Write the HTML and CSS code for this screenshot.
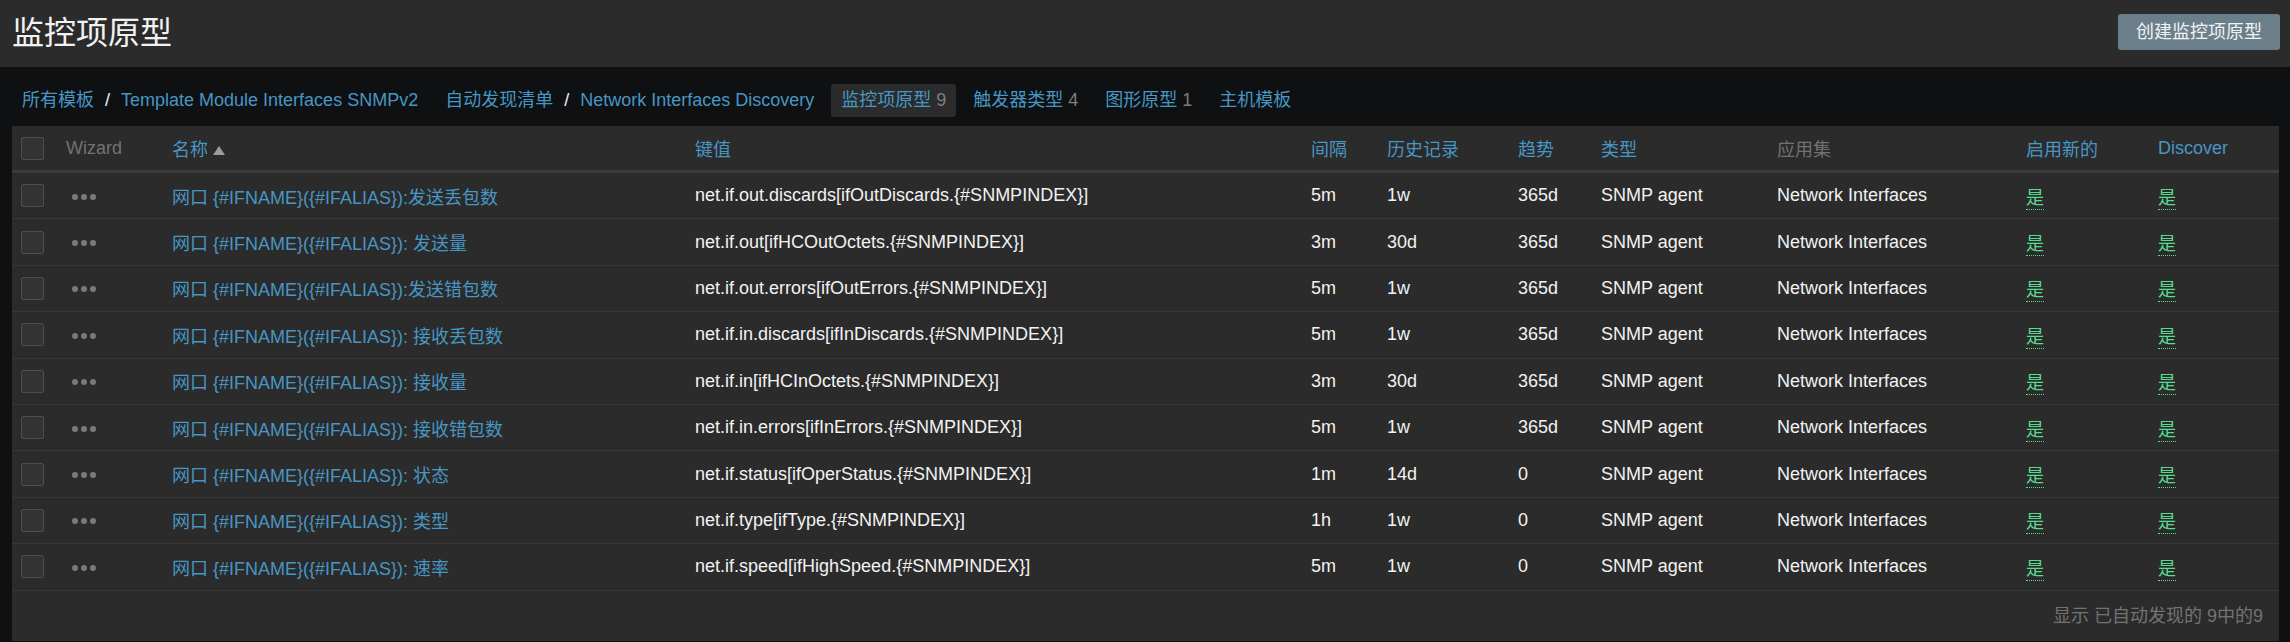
FILE: index.html
```html
<!DOCTYPE html>
<html lang="zh-CN">
<head>
<meta charset="utf-8">
<title>监控项原型</title>
<link rel="stylesheet" href="styles.css">
</head>
<body>
<header class="page-header">
  <h1 class="page-title">监控项原型</h1>
  <button class="btn-create">创建监控项原型</button>
</header>
<nav class="nav">
  <div class="nav-item"><a class="link">所有模板</a><span class="sep">/</span><a class="link">Template Module Interfaces SNMPv2</a></div>
  <div class="nav-item"><a class="link">自动发现清单</a><span class="sep">/</span><a class="link">Network Interfaces Discovery</a></div>
  <div class="nav-item selected"><a class="link">监控项原型</a> <span class="count">9</span></div>
  <div class="nav-item"><a class="link">触发器类型</a> <span class="count">4</span></div>
  <div class="nav-item"><a class="link">图形原型</a> <span class="count">1</span></div>
  <div class="nav-item"><a class="link">主机模板</a></div>
</nav>
<main class="panel">
  <div class="row head">
    <div class="c-cb"><span class="cb"></span></div>
    <div class="muted">Wizard</div>
    <div class="link">名称<span class="sort"></span></div>
    <div class="link">键值</div>
    <div class="link">间隔</div>
    <div class="link">历史记录</div>
    <div class="link">趋势</div>
    <div class="link">类型</div>
    <div class="muted">应用集</div>
    <div class="link">启用新的</div>
    <div class="link">Discover</div>
  </div>

  <div class="row">
    <div class="c-cb"><span class="cb"></span></div>
    <div class="c-dots"><svg class="dots" width="24" height="8" viewBox="0 0 24 8"><circle cx="3" cy="4" r="3"/><circle cx="12" cy="4" r="3"/><circle cx="21" cy="4" r="3"/></svg></div>
    <div class="link">网口 {#IFNAME}({#IFALIAS}):发送丢包数</div>
    <div>net.if.out.discards[ifOutDiscards.{#SNMPINDEX}]</div>
    <div>5m</div><div>1w</div><div>365d</div><div>SNMP agent</div><div>Network Interfaces</div>
    <div><span class="yes">是</span></div><div><span class="yes">是</span></div>
  </div>
  <div class="row">
    <div class="c-cb"><span class="cb"></span></div>
    <div class="c-dots"><svg class="dots" width="24" height="8" viewBox="0 0 24 8"><circle cx="3" cy="4" r="3"/><circle cx="12" cy="4" r="3"/><circle cx="21" cy="4" r="3"/></svg></div>
    <div class="link">网口 {#IFNAME}({#IFALIAS}): 发送量</div>
    <div>net.if.out[ifHCOutOctets.{#SNMPINDEX}]</div>
    <div>3m</div><div>30d</div><div>365d</div><div>SNMP agent</div><div>Network Interfaces</div>
    <div><span class="yes">是</span></div><div><span class="yes">是</span></div>
  </div>
  <div class="row">
    <div class="c-cb"><span class="cb"></span></div>
    <div class="c-dots"><svg class="dots" width="24" height="8" viewBox="0 0 24 8"><circle cx="3" cy="4" r="3"/><circle cx="12" cy="4" r="3"/><circle cx="21" cy="4" r="3"/></svg></div>
    <div class="link">网口 {#IFNAME}({#IFALIAS}):发送错包数</div>
    <div>net.if.out.errors[ifOutErrors.{#SNMPINDEX}]</div>
    <div>5m</div><div>1w</div><div>365d</div><div>SNMP agent</div><div>Network Interfaces</div>
    <div><span class="yes">是</span></div><div><span class="yes">是</span></div>
  </div>
  <div class="row">
    <div class="c-cb"><span class="cb"></span></div>
    <div class="c-dots"><svg class="dots" width="24" height="8" viewBox="0 0 24 8"><circle cx="3" cy="4" r="3"/><circle cx="12" cy="4" r="3"/><circle cx="21" cy="4" r="3"/></svg></div>
    <div class="link">网口 {#IFNAME}({#IFALIAS}): 接收丢包数</div>
    <div>net.if.in.discards[ifInDiscards.{#SNMPINDEX}]</div>
    <div>5m</div><div>1w</div><div>365d</div><div>SNMP agent</div><div>Network Interfaces</div>
    <div><span class="yes">是</span></div><div><span class="yes">是</span></div>
  </div>
  <div class="row">
    <div class="c-cb"><span class="cb"></span></div>
    <div class="c-dots"><svg class="dots" width="24" height="8" viewBox="0 0 24 8"><circle cx="3" cy="4" r="3"/><circle cx="12" cy="4" r="3"/><circle cx="21" cy="4" r="3"/></svg></div>
    <div class="link">网口 {#IFNAME}({#IFALIAS}): 接收量</div>
    <div>net.if.in[ifHCInOctets.{#SNMPINDEX}]</div>
    <div>3m</div><div>30d</div><div>365d</div><div>SNMP agent</div><div>Network Interfaces</div>
    <div><span class="yes">是</span></div><div><span class="yes">是</span></div>
  </div>
  <div class="row">
    <div class="c-cb"><span class="cb"></span></div>
    <div class="c-dots"><svg class="dots" width="24" height="8" viewBox="0 0 24 8"><circle cx="3" cy="4" r="3"/><circle cx="12" cy="4" r="3"/><circle cx="21" cy="4" r="3"/></svg></div>
    <div class="link">网口 {#IFNAME}({#IFALIAS}): 接收错包数</div>
    <div>net.if.in.errors[ifInErrors.{#SNMPINDEX}]</div>
    <div>5m</div><div>1w</div><div>365d</div><div>SNMP agent</div><div>Network Interfaces</div>
    <div><span class="yes">是</span></div><div><span class="yes">是</span></div>
  </div>
  <div class="row">
    <div class="c-cb"><span class="cb"></span></div>
    <div class="c-dots"><svg class="dots" width="24" height="8" viewBox="0 0 24 8"><circle cx="3" cy="4" r="3"/><circle cx="12" cy="4" r="3"/><circle cx="21" cy="4" r="3"/></svg></div>
    <div class="link">网口 {#IFNAME}({#IFALIAS}): 状态</div>
    <div>net.if.status[ifOperStatus.{#SNMPINDEX}]</div>
    <div>1m</div><div>14d</div><div>0</div><div>SNMP agent</div><div>Network Interfaces</div>
    <div><span class="yes">是</span></div><div><span class="yes">是</span></div>
  </div>
  <div class="row">
    <div class="c-cb"><span class="cb"></span></div>
    <div class="c-dots"><svg class="dots" width="24" height="8" viewBox="0 0 24 8"><circle cx="3" cy="4" r="3"/><circle cx="12" cy="4" r="3"/><circle cx="21" cy="4" r="3"/></svg></div>
    <div class="link">网口 {#IFNAME}({#IFALIAS}): 类型</div>
    <div>net.if.type[ifType.{#SNMPINDEX}]</div>
    <div>1h</div><div>1w</div><div>0</div><div>SNMP agent</div><div>Network Interfaces</div>
    <div><span class="yes">是</span></div><div><span class="yes">是</span></div>
  </div>
  <div class="row">
    <div class="c-cb"><span class="cb"></span></div>
    <div class="c-dots"><svg class="dots" width="24" height="8" viewBox="0 0 24 8"><circle cx="3" cy="4" r="3"/><circle cx="12" cy="4" r="3"/><circle cx="21" cy="4" r="3"/></svg></div>
    <div class="link">网口 {#IFNAME}({#IFALIAS}): 速率</div>
    <div>net.if.speed[ifHighSpeed.{#SNMPINDEX}]</div>
    <div>5m</div><div>1w</div><div>0</div><div>SNMP agent</div><div>Network Interfaces</div>
    <div><span class="yes">是</span></div><div><span class="yes">是</span></div>
  </div>

  <div class="paging">显示 已自动发现的 9中的9</div>
</main>
</body>
</html>
```

FILE: styles.css
```css
* { box-sizing: border-box; }
html, body {
  margin: 0;
  padding: 0;
  background: #0e1012;
}
body {
  font-family: "Liberation Sans", Arial, "Noto Sans CJK SC", sans-serif;
  font-size: 18px;
  color: #f2f2f2;
  padding-bottom: 20px;
}
.page-header {
  height: 67px;
  background: #2b2b2b;
  display: flex;
  align-items: center;
  justify-content: space-between;
  padding: 0 10px 0 12px;
}
.page-title {
  margin: 0;
  font-size: 32px;
  font-weight: normal;
  color: #f2f2f2;
  line-height: 1;
  position: relative;
  top: -1px;
}
.btn-create {
  font-family: inherit;
  font-size: 18px;
  color: #f2f2f2;
  background: #6b7f8b;
  border: none;
  border-radius: 3px;
  height: 36px;
  width: 162px;
  padding: 0;
  margin-top: -3px;
  line-height: 36px;
}
.nav {
  display: flex;
  gap: 7px;
  padding: 17px 12px 9px 12px;
}
.nav-item {
  height: 33px;
  line-height: 33px;
  padding: 0 10px;
  border-radius: 3px;
  white-space: nowrap;
}
.nav-item.selected { background: #2b2b2b; }
.link { color: #4796c4; }
.muted { color: #727272; }
.sep { color: #f2f2f2; margin: 0 11px; }
.count { color: #7e7e7e; }
.panel {
  background: #2b2b2b;
  margin: 0 11px 0 12px;
}
.row {
  display: grid;
  grid-template-columns: 54px 106px 523px 616px 76px 131px 83px 176px 249px 132px 1fr;
  align-items: center;
  height: 46.4px;
  border-bottom: 1px solid #383838;
  white-space: nowrap;
}
.row.head {
  height: 47px;
  border-bottom: 3px solid #3c3c3c;
}
.c-cb { padding-left: 9px; display: flex; align-items: center; }
.cb {
  display: block;
  width: 23px;
  height: 23px;
  background: #333333;
  border: 1px solid #4d4d4d;
  border-radius: 2px;
}
.c-dots { padding-left: 6px; display: flex; align-items: center; padding-top: 2px; }
.dots { fill: #7a7a7a; display: block; }
.sort {
  display: inline-block;
  width: 0;
  height: 0;
  border-left: 6px solid transparent;
  border-right: 6px solid transparent;
  border-bottom: 9px solid #9c9c9c;
  margin-left: 5px;
  vertical-align: 1px;
}
.yes {
  color: #59db8f;
  border-bottom: 1px dotted #59db8f;
  padding-bottom: 1px;
}
.paging {
  height: 50px;
  line-height: 50px;
  text-align: right;
  padding-right: 16px;
  color: #737373;
}
```
